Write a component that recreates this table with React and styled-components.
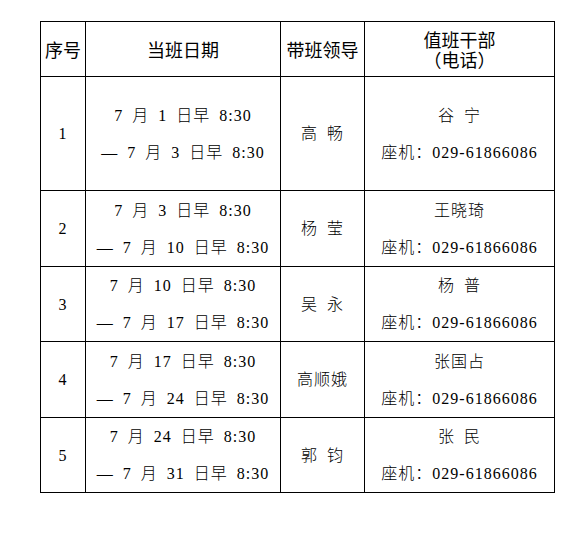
import React from "react";
import styled, { createGlobalStyle } from "styled-components";

const GlobalStyle = createGlobalStyle`
  html, body {
    margin: 0;
    padding: 0;
    background: #fff;
  }
  body {
    font-family: "Liberation Serif", "Noto Sans CJK SC", serif;
    color: #000;
  }
`;

const Page = styled.div`
  padding: 21px 0 0 40px;
`;

const Schedule = styled.table`
  border-collapse: collapse;
  table-layout: fixed;
  width: 514px;
`;

const HeadCell = styled.th`
  border: 1px solid #000;
  padding: 0;
  height: 54px;
  font-family: "Noto Sans CJK SC", sans-serif;
  font-weight: 400;
  font-size: 18px;
  line-height: 20px;
  text-align: center;
  vertical-align: middle;
`;

const Cell = styled.td`
  border: 1px solid #000;
  padding: 0;
  height: ${(p) => p.$height}px;
  font-family: "Liberation Serif", "Noto Sans CJK SC", serif;
  font-weight: 300;
  font-size: 16px;
  line-height: 37px;
  letter-spacing: 1px;
  word-spacing: 4px;
  text-align: center;
  vertical-align: middle;
  white-space: nowrap;
`;

const Line = styled.span`
  display: block;
`;

const PHONE = "座机：029-61866086";

const rows = [
  { no: "1", from: "7 月 1 日早 8:30", to: "— 7 月 3 日早 8:30", leader: "高 畅", duty: "谷 宁", height: 113 },
  { no: "2", from: "7 月 3 日早 8:30", to: "— 7 月 10 日早 8:30", leader: "杨 莹", duty: "王晓琦", height: 75 },
  { no: "3", from: "7 月 10 日早 8:30", to: "— 7 月 17 日早 8:30", leader: "吴 永", duty: "杨 普", height: 74 },
  { no: "4", from: "7 月 17 日早 8:30", to: "— 7 月 24 日早 8:30", leader: "高顺娥", duty: "张国占", height: 75 },
  { no: "5", from: "7 月 24 日早 8:30", to: "— 7 月 31 日早 8:30", leader: "郭 钧", duty: "张 民", height: 74 },
];

export default function App() {
  return (
    <Page>
      <GlobalStyle />
      <Schedule>
        <colgroup>
          <col style={{ width: 45 }} />
          <col style={{ width: 195 }} />
          <col style={{ width: 84 }} />
          <col style={{ width: 190 }} />
        </colgroup>
        <thead>
          <tr>
            <HeadCell>序号</HeadCell>
            <HeadCell>当班日期</HeadCell>
            <HeadCell>带班领导</HeadCell>
            <HeadCell>
              <Line>值班干部</Line>
              <Line>（电话）</Line>
            </HeadCell>
          </tr>
        </thead>
        <tbody>
          {rows.map((r) => (
            <tr key={r.no}>
              <Cell $height={r.height}>{r.no}</Cell>
              <Cell $height={r.height}>
                <Line>{r.from}</Line>
                <Line>{r.to}</Line>
              </Cell>
              <Cell $height={r.height}>{r.leader}</Cell>
              <Cell $height={r.height}>
                <Line>{r.duty}</Line>
                <Line>{PHONE}</Line>
              </Cell>
            </tr>
          ))}
        </tbody>
      </Schedule>
    </Page>
  );
}
